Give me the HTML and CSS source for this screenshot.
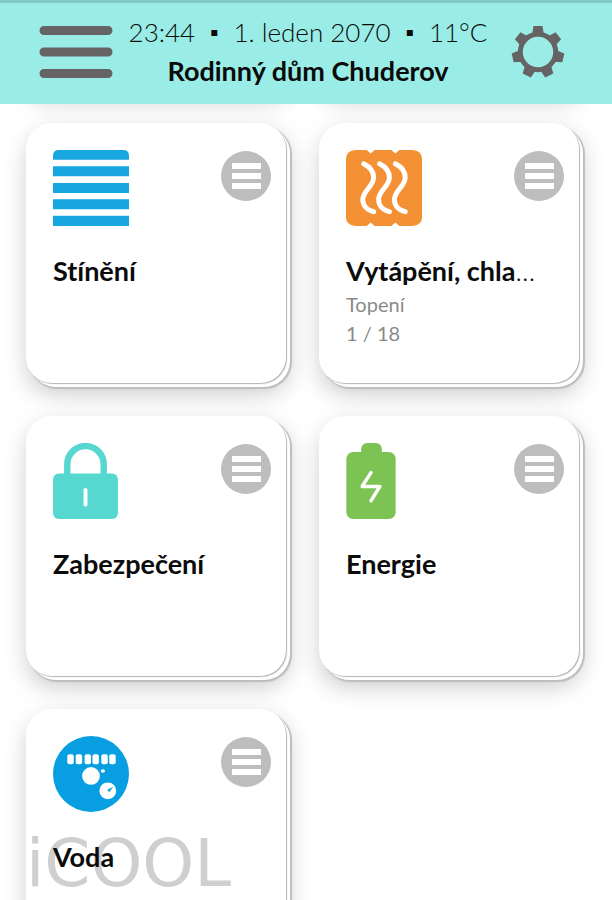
FILE: index.html
```html
<!DOCTYPE html>
<html lang="cs">
<head>
  <meta charset="UTF-8">
  <meta name="viewport" content="width=device-width, initial-scale=1.0">
  <title>Rodinný dům Chuderov</title>
  <link rel="stylesheet" href="styles.css">
</head>
<body>

  <div class="screen">
    <header class="topbar">
      <button class="icon-btn" aria-label="Menu">
        <svg width="74" height="54" viewBox="0 0 74 54">
          <path d="M5 5.500H69M5 27H69M5 48.500H69" stroke="#666365" stroke-width="9" stroke-linecap="round"/>
        </svg>
      </button>
      <div class="heading">
        <p class="status">23:44 &nbsp;▪&nbsp; 1. leden 2070 &nbsp;▪&nbsp; 11°C</p>
        <h1>Rodinný dům Chuderov</h1>
      </div>
      <button class="icon-btn" aria-label="Nastavení">
        <svg width="54" height="54" viewBox="-27 -27 54 54">
          <defs>
            <path id="tooth" d="M-6 -17L-4.500 -26H4.500L6 -17Z"/>
          </defs>
          <g fill="#666365">
            <use href="#tooth"/>
            <use href="#tooth" transform="rotate(51.430)"/>
            <use href="#tooth" transform="rotate(102.860)"/>
            <use href="#tooth" transform="rotate(154.290)"/>
            <use href="#tooth" transform="rotate(205.710)"/>
            <use href="#tooth" transform="rotate(257.140)"/>
            <use href="#tooth" transform="rotate(308.570)"/>
          </g>
          <circle r="17.700" fill="none" stroke="#666365" stroke-width="5"/>
        </svg>
      </button>
    </header>

    <main class="tiles">
      <!-- bottom edge of the row scrolled under the header -->
      <div class="peek"></div>
      <div class="peek"></div>

      <section class="tile">
        <div class="tile-head">
          <svg width="76" height="76" viewBox="0 0 77 77" fill="#18a6e0">
            <path d="M0 10V6Q0 0 6 0H71Q77 0 77 6V10Z"/>
            <path d="M0 16.500H77V26.500H0ZM0 33.500H77V43.500H0ZM0 50H77V60H0ZM0 66.500H77V77H0Z"/>
          </svg>
          <button class="more" aria-label="Stínění – seznam"><span></span><span></span><span></span></button>
        </div>
        <h2>Stínění</h2>
      </section>

      <section class="tile">
        <div class="tile-head">
          <svg width="76" height="76" viewBox="0 0 77 77">
            <path d="M9 0H21L25 3.500L29 0H46L50 3.500L54 0H68Q77 1 77 9V68Q77 76 68 77H54L50 73.500L46 77H29L25 73.500L21 77H9Q0 76 0 68V9Q0 1 9 0Z" fill="#f49135"/>
            <g fill="none" stroke="#fff" stroke-width="5" stroke-linecap="round">
              <path id="wave" d="M18 14C24 17 28 22 28 28C28 36 17 42 17 50C17 56 21 61 28 62.500"/>
              <use href="#wave" x="16"/>
              <use href="#wave" x="32"/>
            </g>
          </svg>
          <button class="more" aria-label="Vytápění – seznam"><span></span><span></span><span></span></button>
        </div>
        <h2>Vytápění, chla<span class="dots">…</span></h2>
        <p class="detail">Topení</p>
        <p class="detail">1 / 18</p>
      </section>

      <section class="tile">
        <div class="tile-head">
          <svg width="65" height="76" viewBox="0 0 66 77">
            <path d="M14.500 34V21.500A18.500 18.500 0 0 1 51.500 21.500V34" fill="none" stroke="#56d8d1" stroke-width="6.500"/>
            <rect y="31" width="66" height="46" rx="6" fill="#56d8d1"/>
            <path d="M33 47.500V62.500" stroke="#fff" stroke-width="4" stroke-linecap="round"/>
          </svg>
          <button class="more" aria-label="Zabezpečení – seznam"><span></span><span></span><span></span></button>
        </div>
        <h2>Zabezpečení</h2>
      </section>

      <section class="tile">
        <div class="tile-head">
          <svg width="50" height="76" viewBox="0 0 50 77">
            <rect x="15" width="21" height="20" rx="6" fill="#7dc353"/>
            <rect y="9" width="50" height="68" rx="7" fill="#7dc353"/>
            <path d="M25 30L16 44H34L25 58.500" fill="none" stroke="#fff" stroke-width="3.500" stroke-linecap="round" stroke-linejoin="round"/>
          </svg>
          <button class="more" aria-label="Energie – seznam"><span></span><span></span><span></span></button>
        </div>
        <h2>Energie</h2>
      </section>

      <section class="tile">
        <div class="watermark">iCOOL</div>
        <div class="tile-head">
          <svg width="76" height="76" viewBox="0 0 77 77">
            <circle cx="38.500" cy="38.500" r="38.500" fill="#079fe2"/>
            <g fill="#fff">
              <rect x="14.500" y="18.500" width="6.500" height="10" rx="2"/>
              <rect x="23" y="18.500" width="6.500" height="10" rx="2"/>
              <rect x="32" y="18.500" width="6.500" height="10" rx="2"/>
              <rect x="40" y="18.500" width="6.500" height="10" rx="2"/>
              <rect x="49" y="18.500" width="6.500" height="10" rx="2"/>
              <rect x="57" y="18.500" width="6.500" height="10" rx="2"/>
              <circle cx="38.500" cy="40.500" r="9"/>
              <ellipse cx="50.500" cy="35.500" rx="2.200" ry="1.700"/>
              <circle cx="55.500" cy="55.500" r="8.500"/>
            </g>
            <path d="M61 51.500L55 54.500L57 57Z" fill="#079fe2"/>
          </svg>
          <button class="more" aria-label="Voda – seznam"><span></span><span></span><span></span></button>
        </div>
        <h2>Voda</h2>
      </section>
    </main>
  </div>

</body>
</html>
```
FILE: styles.css
```css
* {
  box-sizing: border-box;
}

body {
  margin: 0;
  background: #fff;
  color: #0b0b0b;
  font-family: Lato, "Open Sans", sans-serif;
  font-variant-ligatures: none;
}

h1, h2, p {
  margin: 0;
}

button {
  border: none;
  padding: 0;
  cursor: pointer;
}

.screen {
  height: 100vh;
  overflow: hidden;
}

/* Header */
.topbar {
  position: relative;
  z-index: 2;
  display: flex;
  justify-content: space-between;
  align-items: flex-start;
  height: 104px;
  padding: 10px 47px 0 39px;
  background: #9aede6;
  border-top: 3px solid #80c9c5;
}

.icon-btn {
  background: none;
  margin-top: 12px;
}

.icon-btn svg,
.tile-head svg {
  display: block;
}

.heading {
  padding-right: 8px;
  text-align: center;
  line-height: 39px;
  white-space: nowrap;
}

.status {
  font-size: 26px;
  font-weight: 300;
}

h1 {
  font-size: 27px;
  font-weight: 700;
  line-height: 38px;
}

/* Tiles */
.tiles {
  display: grid;
  grid-template-columns: repeat(2, minmax(0, 1fr));
  gap: 33px;
  margin-top: -54px;
  padding: 0 33px 0 26px;
}

.peek {
  height: 40px;
  border-radius: 24px;
  box-shadow: 2px 12px 24px rgba(0, 0, 0, 0.18);
}

.tile {
  position: relative;
  aspect-ratio: 1;
  padding: 27px 15px 0 27px;
  background: #fff;
  border-radius: 26px;
  box-shadow:
    1px 1px 1px #b4b4b4,
    4px 4px 0 #fff,
    5px 5px 1px 1px #bdbdbd,
    2px 10px 24px rgba(0, 0, 0, 0.22);
}

.tile-head {
  display: flex;
  justify-content: space-between;
  align-items: flex-start;
  margin-bottom: 28px;
}

.more {
  display: flex;
  flex-direction: column;
  justify-content: center;
  align-items: center;
  gap: 4px;
  width: 50px;
  height: 50px;
  margin-top: 1px;
  background: #bdbdbd;
  border-radius: 50%;
}

.more span {
  width: 29px;
  height: 6px;
  background: #fff;
}

h2 {
  position: relative;
  margin-bottom: 2px;
  font-size: 27px;
  font-weight: 700;
  line-height: 34px;
  white-space: nowrap;
}

.dots {
  font-weight: 300;
}

.detail {
  color: #8a8a8a;
  font-size: 20px;
  font-weight: 400;
  line-height: 29px;
}

/* Brand mark behind the last tile's title */
.watermark {
  position: absolute;
  left: 0;
  right: 0;
  top: 117px;
  overflow: hidden;
  color: #cfcfcf;
  font-family: "DejaVu Sans", sans-serif;
  font-size: 66px;
  line-height: 76px;
}
```
